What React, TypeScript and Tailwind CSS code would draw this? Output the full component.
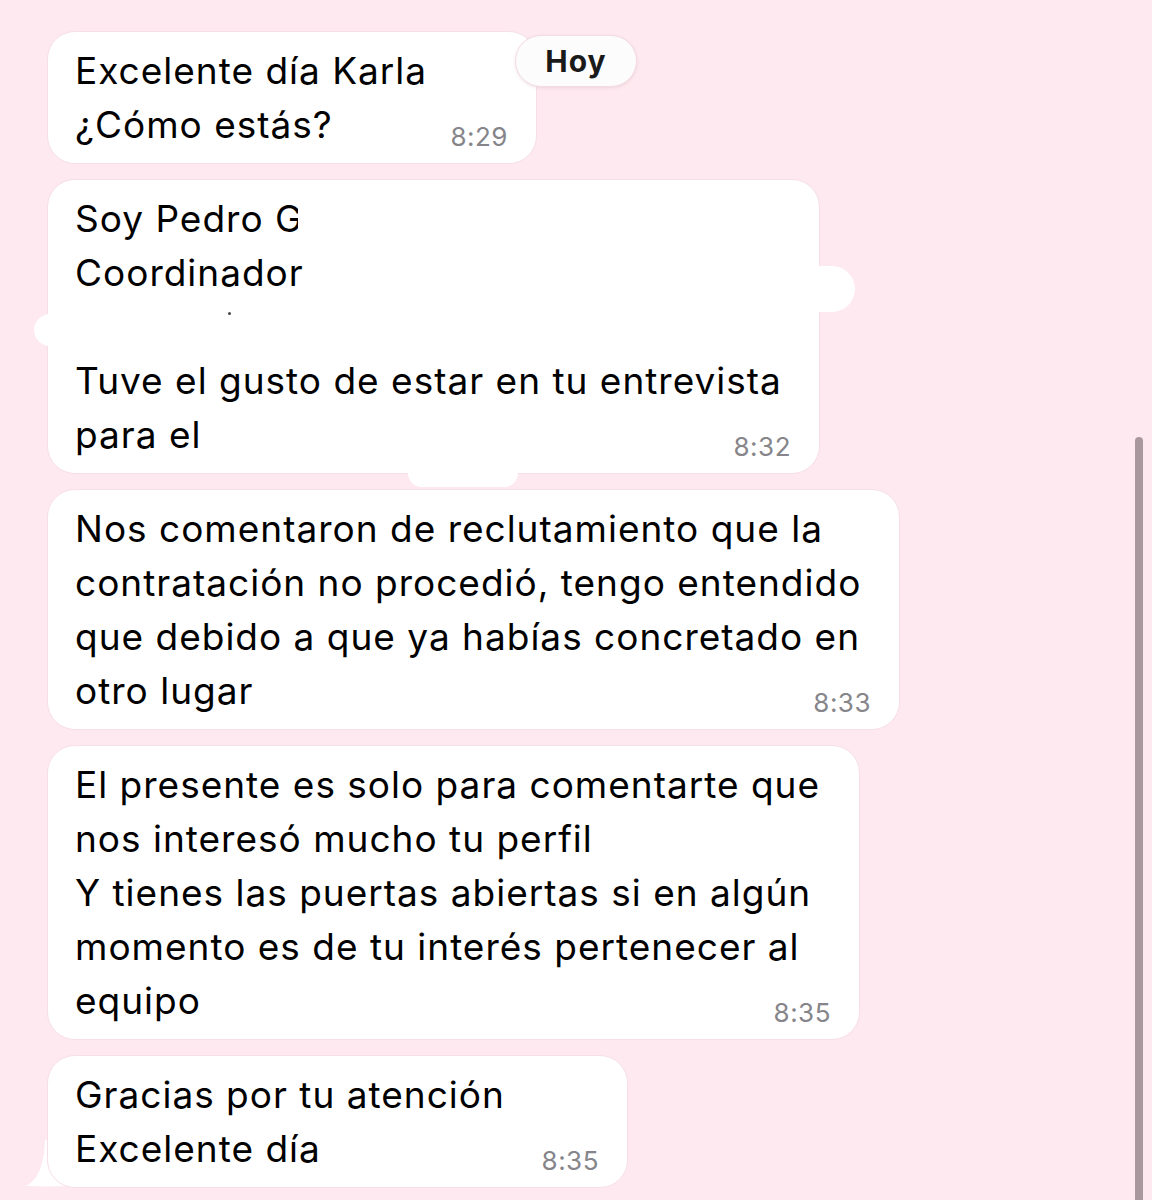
const font = { fontFamily: 'Inter, "Noto Sans", sans-serif' }

function Bubble({ width, time, children, extra }: { width: string; time: string; children: React.ReactNode; extra?: React.ReactNode }) {
  return (
    <div className={`relative ${width} rounded-[28px] bg-white border border-[#f6dfe5] pl-[27px] pr-[28px] pt-[12px] pb-[11px]`}>
      <div className="text-[37px] leading-[54px] text-black tracking-[1px]">{children}</div>
      <span className="absolute right-[28px] bottom-[13px] text-[26px] leading-none tracking-[0.5px] text-[#85858a]">{time}</span>
      {extra}
    </div>
  )
}

export default function App() {
  return (
    <div className="relative w-[1152px] h-[1200px] overflow-hidden bg-[#fde9ef]" style={font}>
      <div className="flex flex-col gap-[15px] pl-[47px] pt-[31px]">
        <Bubble width="w-[490px]" time="8:29">
          <div>Excelente día Karla</div>
          <div>¿Cómo estás?</div>
        </Bubble>

        <Bubble
          width="w-[773px]"
          time="8:32"
          extra={
            <>
              <div className="absolute left-[250px] top-[14px] w-[300px] h-[48px] bg-white" />
              <div className="absolute right-[-36px] top-[86px] w-[90px] h-[46px] rounded-full bg-white" />
              <div className="absolute left-[-14px] top-[134px] w-[60px] h-[32px] rounded-full bg-white" />
              <div className="absolute left-[360px] bottom-[-14px] w-[110px] h-[18px] rounded-b-[14px] bg-white" />
              <div className="absolute left-[180px] top-[132px] w-[3px] h-[3px] rounded-full bg-[#444]" />
            </>
          }
        >
          <div>Soy Pedro G</div>
          <div>Coordinador</div>
          <div>&nbsp;</div>
          <div>Tuve el gusto de estar en tu entrevista</div>
          <div>para el</div>
        </Bubble>

        <Bubble width="w-[853px]" time="8:33">
          <div>Nos comentaron de reclutamiento que la</div>
          <div>contratación no procedió, tengo entendido</div>
          <div>que debido a que ya habías concretado en</div>
          <div>otro lugar</div>
        </Bubble>

        <Bubble width="w-[813px]" time="8:35">
          <div>El presente es solo para comentarte que</div>
          <div>nos interesó mucho tu perfil</div>
          <div>Y tienes las puertas abiertas si en algún</div>
          <div>momento es de tu interés pertenecer al</div>
          <div>equipo</div>
        </Bubble>

        <div className="relative">
          <svg className="absolute left-[-24px] bottom-[-2px]" width="60" height="50" viewBox="0 0 60 50">
            <path d="M22 0 L50 0 L50 46 C40 46 26 47 3 46 C14 40 21 28 22 0 Z" fill="#ffffff" />
          </svg>
          <Bubble width="w-[581px]" time="8:35">
            <div>Gracias por tu atención</div>
            <div>Excelente día</div>
          </Bubble>
        </div>
      </div>

      <div className="absolute left-[515px] top-[35px] rounded-full bg-[#fdfcfc] border border-[#f3dde3] shadow-[0_1px_3px_rgba(200,150,165,0.25)] w-[122px] h-[52px] flex items-center justify-center">
        <span className="text-[30px] font-bold tracking-[1px] text-[#1a1a1a]">Hoy</span>
      </div>

      <div className="absolute left-[1135px] top-[437px] w-[8px] h-[800px] rounded-full bg-[#a8989d]" />
    </div>
  )
}
